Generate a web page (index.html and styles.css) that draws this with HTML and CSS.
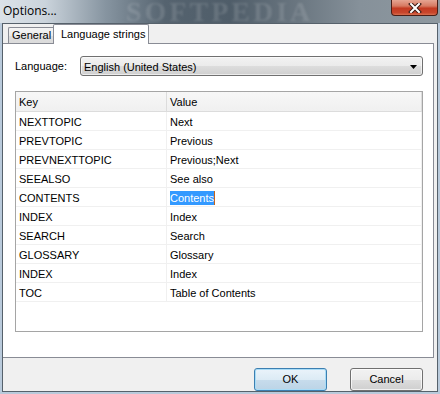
FILE: index.html
```html
<!DOCTYPE html>
<html>
<head>
<meta charset="utf-8">
<link rel="stylesheet" href="styles.css">
</head>
<body>
<div class="window">
  <div class="titlebar">
    <span class="title">Options...</span>
    <span class="watermark">SOFTPEDIA</span>
    <div class="close">
      <svg width="14" height="10" viewBox="0 0 14 10"><path d="M3 1 L11 9 M11 1 L3 9" stroke="#3a1a14" stroke-width="4" stroke-linecap="square"/><path d="M3 1 L11 9 M11 1 L3 9" stroke="#ffffff" stroke-width="2" stroke-linecap="square"/></svg>
    </div>
  </div>
  <div class="client">
    <div class="tabs">
      <div class="tab general">General</div>
      <div class="tab active">Language strings</div>
    </div>
    <div class="panel">
      <div class="lang-row">
        <span class="lang-label">Language:</span>
        <div class="combo">
          <span class="combo-text">English (United States)</span>
          <svg class="combo-arrow" width="7" height="4" viewBox="0 0 7 4"><path d="M0 0 H7 L3.5 4 Z" fill="#000"/></svg>
        </div>
      </div>
      <div class="grid">
        <div class="row head"><div class="cell key">Key</div><div class="cell val">Value</div></div>
        <div class="row"><div class="cell key">NEXTTOPIC</div><div class="cell val">Next</div></div>
        <div class="row"><div class="cell key">PREVTOPIC</div><div class="cell val">Previous</div></div>
        <div class="row"><div class="cell key">PREVNEXTTOPIC</div><div class="cell val">Previous;Next</div></div>
        <div class="row"><div class="cell key">SEEALSO</div><div class="cell val">See also</div></div>
        <div class="row"><div class="cell key">CONTENTS</div><div class="cell val"><span class="sel">Contents</span><span class="caret"></span></div></div>
        <div class="row"><div class="cell key">INDEX</div><div class="cell val">Index</div></div>
        <div class="row"><div class="cell key">SEARCH</div><div class="cell val">Search</div></div>
        <div class="row"><div class="cell key">GLOSSARY</div><div class="cell val">Glossary</div></div>
        <div class="row"><div class="cell key">INDEX</div><div class="cell val">Index</div></div>
        <div class="row"><div class="cell key">TOC</div><div class="cell val">Table of Contents</div></div>
      </div>
    </div>
    <div class="buttons">
      <div class="btn default">OK</div>
      <div class="btn">Cancel</div>
    </div>
  </div>
</div>
</body>
</html>
```
FILE: styles.css
```css
html, body {
  margin: 0;
  padding: 0;
}
body {
  width: 440px;
  height: 394px;
  overflow: hidden;
  font-family: "Liberation Sans", Arial, sans-serif;
  font-size: 11px;
  color: #000;
}
.window {
  width: 440px;
  height: 394px;
  background: #b9cadb;
  display: flex;
  flex-direction: column;
}
.titlebar {
  height: 23px;
  position: relative;
  display: flex;
  align-items: flex-start;
  background: linear-gradient(90deg, #dbe2e8 0px, #cbd4dc 45px, #8795a1 105px, #55636f 165px, #4f5d69 230px, #6b7781 300px, #86919a 360px, #8e989f 440px);
  overflow: hidden;
}
.title {
  font-family: "Open Sans", "Noto Sans", sans-serif;
  font-size: 12px;
  line-height: 16px;
  margin: 3px 0 0 3px;
  color: #000;
  position: relative;
  z-index: 1;
}
.watermark {
  position: absolute;
  left: 126px;
  top: 0;
  line-height: 23px;
  font-family: "Liberation Serif", serif;
  font-weight: bold;
  font-size: 28px;
  letter-spacing: 3px;
  color: rgba(255, 255, 255, 0.13);
  filter: blur(1px);
}
.close {
  margin-left: auto;
  margin-right: 2px;
  width: 45px;
  height: 15px;
  border: 1px solid #4a1e16;
  border-top: none;
  border-radius: 0 0 4px 4px;
  background: linear-gradient(180deg, #e6a592 0%, #d77a62 40%, #c33b22 55%, #c9462c 85%, #d8704f 100%);
  display: flex;
  align-items: center;
  justify-content: center;
  position: relative;
  z-index: 1;
}
.client {
  margin: 0 2px;
  height: 367px;
  border: 1px solid #56616b;
  background: #f0f0f0;
  display: flex;
  flex-direction: column;
}
.tabs {
  height: 20px;
  display: flex;
  align-items: flex-end;
  padding-left: 5px;
}
.tab {
  box-sizing: border-box;
  height: 16px;
  line-height: 15px;
  border: 1px solid #898c95;
  border-bottom: none;
  white-space: nowrap;
}
.tab.general {
  width: 45px;
  padding-left: 3px;
  border-right: none;
  background: linear-gradient(180deg, #f4f4f4 0%, #ebebeb 50%, #dedede 51%, #dbdbdb 100%);
  border-radius: 2px 0 0 0;
}
.tab.active {
  width: 96px;
  height: 20px;
  line-height: 18px;
  padding-left: 7px;
  background: #fff;
  margin-bottom: -1px;
  position: relative;
  z-index: 1;
  border-radius: 2px 2px 0 0;
}
.panel {
  height: 303px;
  background: #fff;
  border: 1px solid #898c95;
  border-left: none;
  margin-right: 3px;
  padding: 12px 10px 15px 12px;
  display: flex;
  flex-direction: column;
  gap: 15px;
}
.lang-row {
  display: flex;
  align-items: center;
  height: 20px;
}
.lang-label {
  width: 65px;
}
.combo {
  flex: 1;
  height: 18px;
  border: 1px solid #707070;
  border-radius: 3px;
  background: linear-gradient(180deg, #f2f2f2 0%, #ebebeb 50%, #dddddd 51%, #cfcfcf 100%);
  display: flex;
  align-items: center;
  padding: 0 4px 0 3px;
  box-shadow: inset 0 0 0 1px rgba(255,255,255,0.6);
}
.combo-text {
  flex: 1;
  margin-top: 1px;
}
.combo-arrow {
  margin-right: 1px;
  margin-top: 1px;
}
.grid {
  height: 239px;
  border: 1px solid #a5a5a5;
  background: #fff;
}
.row {
  display: flex;
  height: 18px;
  border-bottom: 1px solid #f0f0f0;
}
.row.head {
  height: 19px;
  background: linear-gradient(180deg, #f7f7f7 0%, #f0f0f0 100%);
  border-bottom: 1px solid #dcdcdc;
}
.cell {
  line-height: 18px;
  padding-left: 3px;
  padding-top: 1px;
  white-space: nowrap;
  box-sizing: border-box;
}
.cell.key {
  width: 151px;
  border-right: 1px solid #f0f0f0;
}
.cell.val {
  width: 255px;
  border-right: 1px solid #f0f0f0;
  display: flex;
  align-items: center;
}
.row.head .cell {
  border-right-color: #dcdcdc;
}
.sel {
  background: #3399ff;
  color: #fff;
  line-height: 14px;
  height: 14px;
}
.caret {
  width: 1px;
  height: 14px;
  background: #c4651c;
}
.buttons {
  flex: 1;
  display: flex;
  justify-content: flex-end;
  align-items: flex-start;
  padding: 10px 14px 0 0;
  gap: 23px;
}
.btn {
  width: 71px;
  height: 21px;
  line-height: 21px;
  text-align: center;
  border: 1px solid #707070;
  border-radius: 3px;
  background: linear-gradient(180deg, #f2f2f2 0%, #ebebeb 50%, #dddddd 51%, #cfcfcf 100%);
  box-shadow: inset 0 0 0 1px rgba(255,255,255,0.7);
}
.btn.default {
  border-color: #3c7fb1;
  background: linear-gradient(180deg, #eaf3fa 0%, #dcebf5 50%, #c7dcec 51%, #bcd4e6 100%);
  box-shadow: inset 0 0 0 1px #a8dcf7;
}
```
